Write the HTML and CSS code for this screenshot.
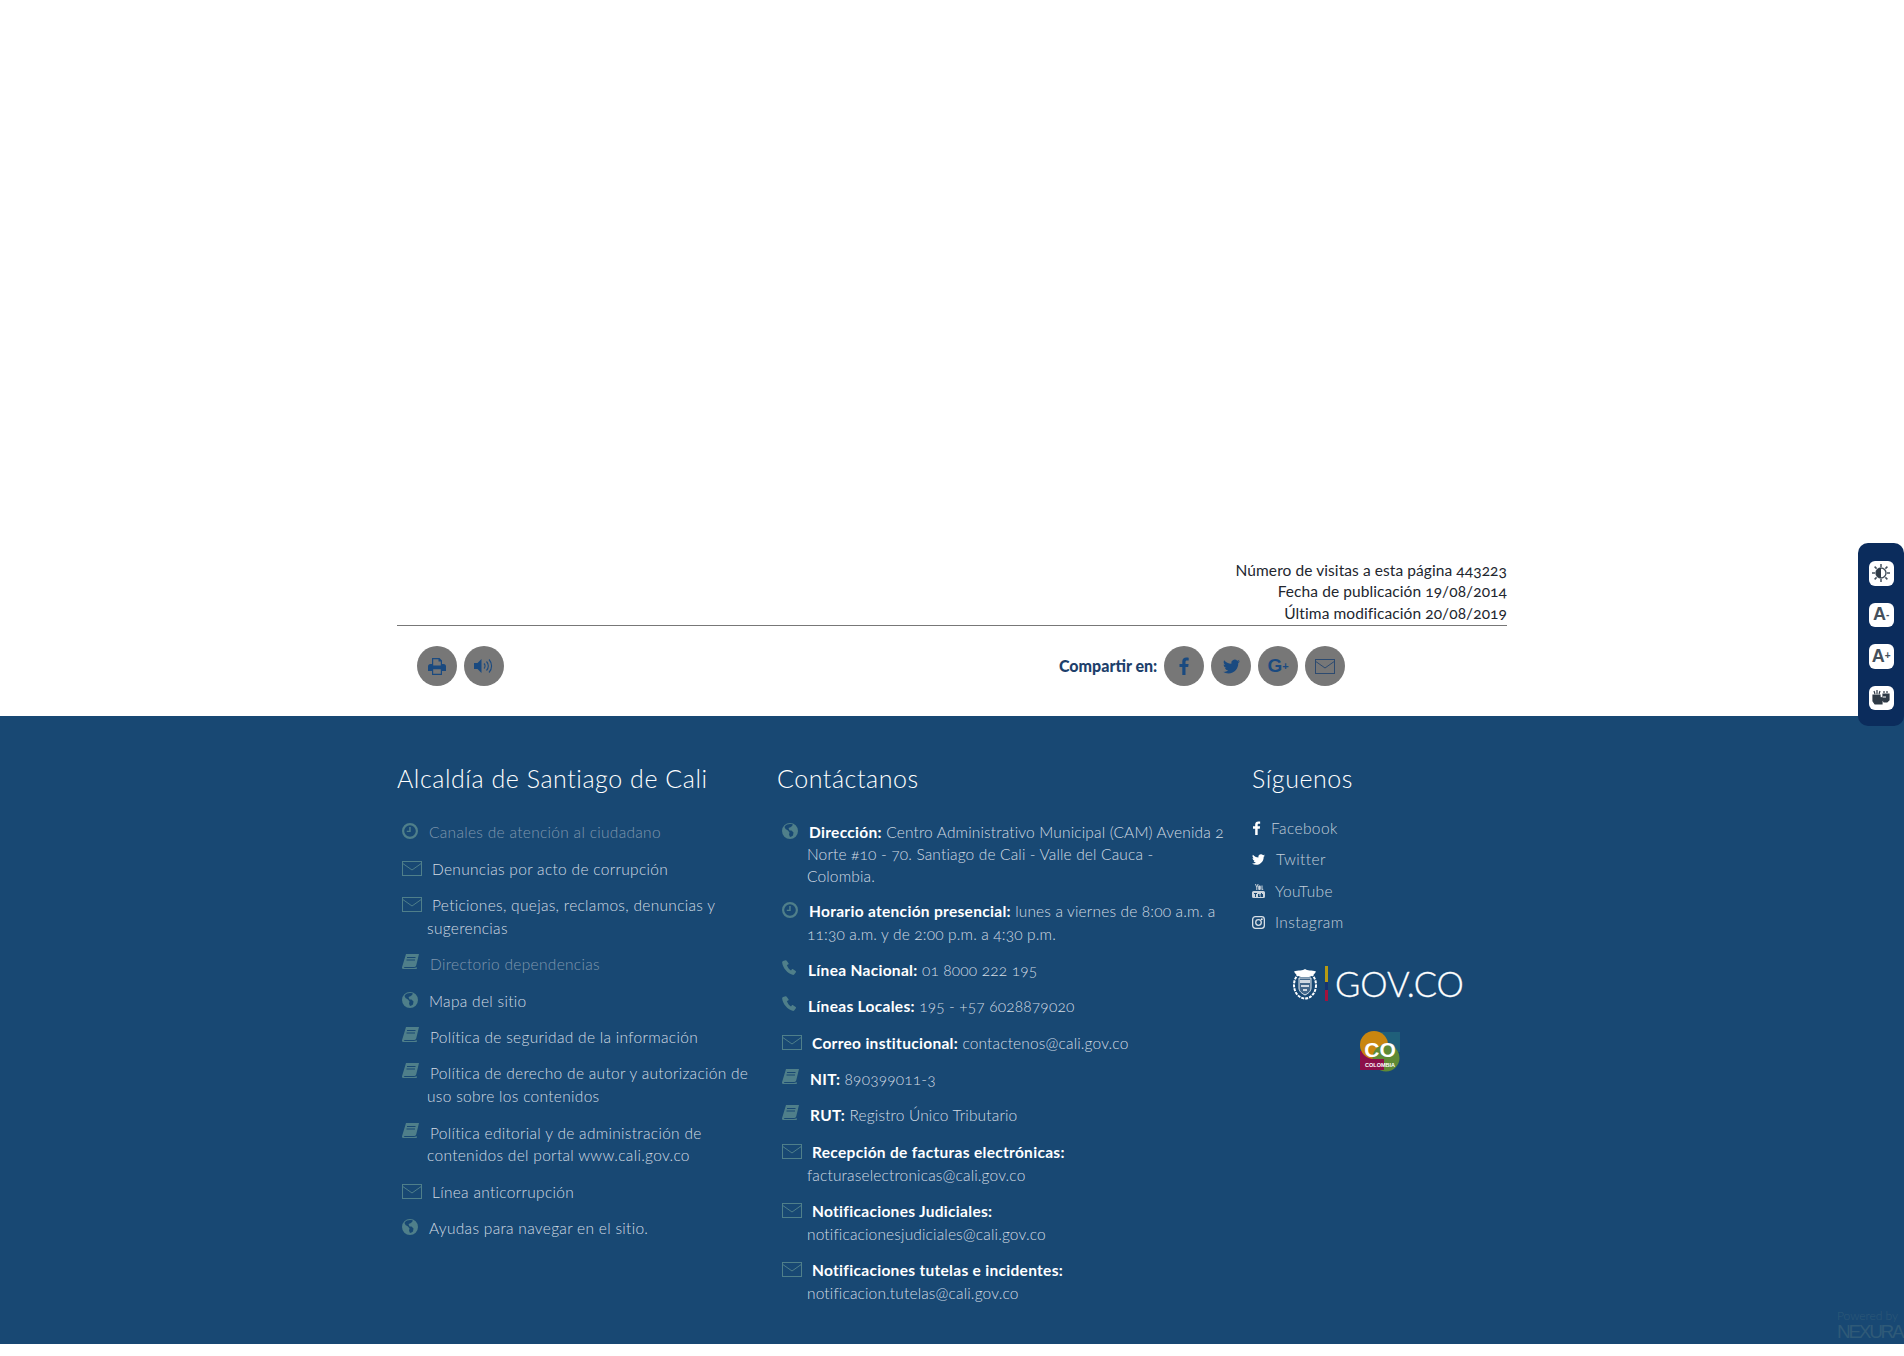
FILE: index.html
```html
<!DOCTYPE html>
<html lang="es">
<head>
    <meta charset="UTF-8">
    <title>Alcaldía de Santiago de Cali</title>
    <link rel="stylesheet" href="styles.css">
</head>
<body>
    <!-- Iconos reutilizables -->
    <svg class="sprites" aria-hidden="true">
        <symbol id="i-clock" viewBox="0 0 16 16"><path fill-rule="evenodd" d="M8 0a8 8 0 1 1 0 16A8 8 0 0 1 8 0zm0 2.2a5.8 5.8 0 1 0 0 11.6A5.8 5.8 0 0 0 8 2.200zM7.200 4h1.500v5H4.800V7.700h2.400z"/></symbol>
        <symbol id="i-mail" viewBox="0 0 20 15"><rect x=".5" y=".5" width="19" height="14" fill="none" stroke="currentColor"/><path d="M.8 2.500 10 9l9.200-6.500" fill="none" stroke="currentColor"/></symbol>
        <symbol id="i-book" viewBox="0 0 17 15"><path d="M4 0h13l-2.800 11.500a2 2 0 0 1-1.800 1.500H3a1.300 1.300 0 0 0-1.200 1H12l3-.8-.3 1.800H1.500A1.500 1.500 0 0 1 0 13.200zM5 3v1h8.500V3zM4.500 5.500v1H13v-1z" fill-rule="evenodd"/></symbol>
        <symbol id="i-globe" viewBox="0 0 16 16"><path fill-rule="evenodd" d="M8 0a8 8 0 1 1 0 16A8 8 0 0 1 8 0zM5 1.500c-1 .5-2 1.500-2.500 2.500l1 2 2.500 1.500 1.500 2-.5 2 1 2.500c1-.2 2-.7 3-1.500l.5-3-2-2H7.500L6.500 5 9 4l2-2.200C10 1 8.500 1 8 1z"/></symbol>
        <symbol id="i-phone" viewBox="0 0 16 16"><path d="M3.800.2 1.200 1C.5 1.300 0 2 .2 3c.7 5.500 5.500 11.200 11 12.800.8.200 1.600 0 2-.6l1.600-2.200c.3-.5.200-1-.2-1.300l-2.800-1.900c-.4-.3-.9-.2-1.200.1l-1 1.200C7.700 10 5.800 7.600 5.200 5.300l1.400-.6c.4-.2.600-.7.500-1.100L5 .7C4.800.3 4.300 0 3.800.2z"/></symbol>
        <symbol id="i-fb" viewBox="0 0 10 18"><path d="M6.500 18V10h2.700l.4-3.100H6.500V5c0-.9.300-1.500 1.500-1.500h1.700V.7C9.400.600 8.400.500 7.300.500 4.900.500 3.300 2 3.300 4.600v2.300H.5V10h2.800v8z"/></symbol>
        <symbol id="i-tw" viewBox="0 0 24 24"><path d="M23.953 4.570a10 10 0 0 1-2.825.775 4.958 4.958 0 0 0 2.163-2.723c-.951.555-2.005.959-3.127 1.184a4.920 4.920 0 0 0-8.384 4.482C7.690 8.095 4.067 6.130 1.640 3.162a4.822 4.822 0 0 0-.666 2.475c0 1.710.870 3.213 2.188 4.096a4.904 4.904 0 0 1-2.228-.616v.060a4.923 4.923 0 0 0 3.946 4.827 4.996 4.996 0 0 1-2.212.085 4.936 4.936 0 0 0 4.604 3.417 9.867 9.867 0 0 1-6.102 2.105c-.390 0-.779-.023-1.170-.067a13.995 13.995 0 0 0 7.557 2.209c9.053 0 13.998-7.496 13.998-13.985 0-.210 0-.420-.015-.630A9.935 9.935 0 0 0 24 4.590z"/></symbol>
        <symbol id="i-yt" viewBox="0 0 13 14"><path d="M3 0h1l.8 2.500L5.600 0h1L5.300 3.500V6h-1V3.500zM7.500 1.500c.9 0 1.300.5 1.300 1.300v2c0 .8-.4 1.300-1.300 1.300S6.200 5.600 6.200 4.800v-2c0-.8.4-1.300 1.300-1.300zM9.500 1.600h1v3.500c.3-.3.500-.3.700-.3v1.200h-.7v-.5c-.5.600-1 .6-1 0z"/><path fill-rule="evenodd" d="M1.500 7h10A1.500 1.500 0 0 1 13 8.500v4a1.500 1.500 0 0 1-1.500 1.500h-10A1.500 1.500 0 0 1 0 12.500v-4A1.500 1.500 0 0 1 1.500 7zM2 9v1h1v3h1v-3h1V9zm4 1v3h2.500v-3h-1v2H7v-2zm3-1v4h2v-3h-1V9z"/></symbol>
        <symbol id="i-ig" viewBox="0 0 14 14"><rect x=".7" y=".7" width="12.600" height="12.600" rx="3" fill="none" stroke="currentColor" stroke-width="1.400"/><circle cx="7" cy="7" r="3" fill="none" stroke="currentColor" stroke-width="1.400"/><circle cx="10.600" cy="3.400" r=".9"/></symbol>
        <symbol id="i-print" viewBox="0 0 18 17"><path fill-rule="evenodd" d="M4 0h7.500L14 2.500V6h1.500A2.500 2.500 0 0 1 18 8.500V13h-4v4H4v-4H0V8.500A2.500 2.500 0 0 1 2.500 6H4zm1.200 1.200V7.500h7.600V3.500h-2.300V1.200zm0 10v4.600h7.600v-4.600z"/></symbol>
        <symbol id="i-sound" viewBox="0 0 20 16"><path d="M7.500 1v14L3.500 11H0V5h3.500z"/><path d="M10 5.500a3.500 3.500 0 0 1 0 5M12.500 3.500a6.500 6.500 0 0 1 0 9M15 1.500a9.500 9.500 0 0 1 0 13" fill="none" stroke="currentColor" stroke-width="1.100"/></symbol>
    </svg>

    <main class="content">
        <div class="visits">
            <p>Número de visitas a esta página 443223</p>
            <p>Fecha de publicación 19/08/2014</p>
            <p>Última modificación 20/08/2019</p>
        </div>
        <div class="tools">
            <div class="tools-left">
                <a class="round-btn"><svg class="ic-print"><use href="#i-print"/></svg></a>
                <a class="round-btn"><svg class="ic-sound"><use href="#i-sound"/></svg></a>
            </div>
            <div class="share">
                <strong class="share-label">Compartir en:</strong>
                <a class="round-btn"><svg class="ic-fb"><use href="#i-fb"/></svg></a>
                <a class="round-btn"><svg class="ic-tw"><use href="#i-tw"/></svg></a>
                <a class="round-btn gplus">G<sup>+</sup></a>
                <a class="round-btn mail-btn"><svg class="ic-mail-big"><use href="#i-mail"/></svg></a>
            </div>
        </div>
    </main>

    <footer class="footer">
        <div class="footer-grid">
            <section>
                <h2>Alcaldía de Santiago de Cali</h2>
                <ul class="links">
                    <li class="dim"><svg class="ic ic-16"><use href="#i-clock"/></svg>Canales de atención al ciudadano</li>
                    <li><svg class="ic ic-mail"><use href="#i-mail"/></svg>Denuncias por acto de corrupción</li>
                    <li><svg class="ic ic-mail"><use href="#i-mail"/></svg>Peticiones, quejas, reclamos, denuncias y<br>sugerencias</li>
                    <li class="dim"><svg class="ic ic-book"><use href="#i-book"/></svg>Directorio dependencias</li>
                    <li><svg class="ic ic-16"><use href="#i-globe"/></svg>Mapa del sitio</li>
                    <li><svg class="ic ic-book"><use href="#i-book"/></svg>Política de seguridad de la información</li>
                    <li><svg class="ic ic-book"><use href="#i-book"/></svg>Política de derecho de autor y autorización de<br>uso sobre los contenidos</li>
                    <li><svg class="ic ic-book"><use href="#i-book"/></svg>Política editorial y de administración de<br>contenidos del portal www.cali.gov.co</li>
                    <li><svg class="ic ic-mail"><use href="#i-mail"/></svg>Línea anticorrupción</li>
                    <li><svg class="ic ic-16"><use href="#i-globe"/></svg>Ayudas para navegar en el sitio.</li>
                </ul>
            </section>
            <section>
                <h2>Contáctanos</h2>
                <ul class="links links-contact">
                    <li class="address"><svg class="ic ic-16"><use href="#i-globe"/></svg><b>Dirección:</b> Centro Administrativo Municipal (CAM) Avenida 2<br>Norte #10 - 70. Santiago de Cali - Valle del Cauca -<br>Colombia.</li>
                    <li><svg class="ic ic-16"><use href="#i-clock"/></svg><b>Horario atención presencial:</b> lunes a viernes de 8:00 a.m. a<br>11:30 a.m. y de 2:00 p.m. a 4:30 p.m.</li>
                    <li><svg class="ic ic-phone"><use href="#i-phone"/></svg><b>Línea Nacional:</b> 01 8000 222 195</li>
                    <li><svg class="ic ic-phone"><use href="#i-phone"/></svg><b>Líneas Locales:</b> 195 - +57 6028879020</li>
                    <li><svg class="ic ic-mail"><use href="#i-mail"/></svg><b>Correo institucional:</b> contactenos@cali.gov.co</li>
                    <li><svg class="ic ic-book"><use href="#i-book"/></svg><b>NIT:</b> 890399011-3</li>
                    <li><svg class="ic ic-book"><use href="#i-book"/></svg><b>RUT:</b> Registro Único Tributario</li>
                    <li><svg class="ic ic-mail"><use href="#i-mail"/></svg><b>Recepción de facturas electrónicas:</b><br>facturaselectronicas@cali.gov.co</li>
                    <li><svg class="ic ic-mail"><use href="#i-mail"/></svg><b>Notificaciones Judiciales:</b><br>notificacionesjudiciales@cali.gov.co</li>
                    <li><svg class="ic ic-mail"><use href="#i-mail"/></svg><b>Notificaciones tutelas e incidentes:</b><br>notificacion.tutelas@cali.gov.co</li>
                </ul>
            </section>
            <section>
                <h2>Síguenos</h2>
                <ul class="social">
                    <li><svg class="s-fb"><use href="#i-fb"/></svg>Facebook</li>
                    <li><svg class="s-tw"><use href="#i-tw"/></svg>Twitter</li>
                    <li><svg class="s-yt"><use href="#i-yt"/></svg>YouTube</li>
                    <li><svg class="s-ig"><use href="#i-ig"/></svg>Instagram</li>
                </ul>
                <div class="gov">
                    <svg class="gov-shield" viewBox="0 0 26 32">
                        <ellipse cx="13" cy="17" rx="11" ry="13.500" fill="none" stroke="#fff" stroke-width="2" stroke-dasharray="3 1"/>
                        <path d="M7 10h12v10c0 3.500-3 5.500-6 7-3-1.500-6-3.500-6-7z" fill="#42678a" stroke="#e3e9ee"/>
                        <path d="M8 12h10v3H8zM9 17h8v2H9zM11 21h4v2h-4z" fill="#cfd9e2"/>
                        <path d="M13 1c2 2 7 1 11 2.500C23 6 20 8.500 17 9H9C6 8.500 3 6 2 3.500 6 2 11 3 13 1z" fill="#fff"/>
                    </svg>
                    <span class="gov-bar"></span>
                    <span class="gov-text">GOV.CO</span>
                </div>
                <svg class="co-logo" viewBox="0 0 40 41">
                    <rect x="18" y="1" width="22" height="20" fill="#1f5f7a"/>
                    <rect x="0" y="20" width="22" height="19" fill="#8c0f4a"/>
                    <circle cx="14" cy="14" r="14" fill="#c9860f"/>
                    <circle cx="26" cy="27" r="13.500" fill="#5f8a35"/>
                    <path d="M0 28h24v11H0z" fill="#8c0f4a"/>
                    <text x="20" y="26" class="co-big">CO</text>
                    <text x="20" y="35.500" class="co-small">COLOMBIA</text>
                </svg>
            </section>
        </div>
    </footer>
    <div class="bottom-strip"></div>

    <!-- Barra de accesibilidad -->
    <aside class="a11y">
        <a class="a11y-btn"><svg viewBox="0 0 20 20" class="a11y-ic"><path d="M10 1v3M10 16v3M1 10h3M16 10h3M3.600 3.600l2 2M14.400 14.400l2 2M3.600 16.400l2-2M14.400 5.600l2-2" stroke="#44505c" stroke-width="1.500" fill="none"/><circle cx="10" cy="10" r="5" fill="#fff" stroke="#44505c" stroke-width="1.400"/><path d="M10 5a5 5 0 0 0 0 10z" fill="#2f3a46"/></svg></a>
        <a class="a11y-btn">A<sup>-</sup></a>
        <a class="a11y-btn">A<sup>+</sup></a>
        <a class="a11y-btn"><svg viewBox="0 0 20 20" class="a11y-ic"><path d="M2 7h7v2l2 1v6H4l-2-3zM12 6h6v6l-2 2h-3l-1-2zM3 3l1 3M6 2v4M9 3 8 6M13 3v2M16 3v2" fill="#2f3a46" stroke="#2f3a46" stroke-width="1.200"/><path d="M12 9h3" stroke="#fff"/></svg></a>
    </aside>

    <div class="nexura">
        <span class="nexura-top">Powered by</span>
        <span class="nexura-name">NEXURA</span>
    </div>
</body>
</html>
```

FILE: styles.css
```css
/* Base */
* {
    box-sizing: border-box;
}

body {
    margin: 0;
    background: #fff;
    font-family: "Lato", "Open Sans", sans-serif;
    font-variant-numeric: oldstyle-nums;
    position: relative;
    height: 1356px;
    overflow: hidden;
}

.sprites {
    display: none;
}

p {
    margin: 0;
}

/* Contenido superior */
.content {
    width: 1110px;
    margin: 0 auto;
    padding-top: 560px;
}

.visits {
    text-align: right;
    font-size: 15.500px;
    line-height: 21.400px;
    color: #22262e;
    letter-spacing: .08px;
    border-bottom: 1px solid #777;
    padding-bottom: 1px;
}

.tools {
    display: flex;
    height: 90px;
    padding: 20px 0 0 20px;
}

.tools-left {
    display: flex;
    gap: 7px;
    width: 642px;
}

.share {
    display: flex;
    align-items: flex-start;
    gap: 7px;
}

.share-label {
    line-height: 40px;
    font-size: 16px;
    font-weight: 900;
    color: #1d3f6b;
    width: 98px;
    white-space: nowrap;
}

.round-btn {
    width: 40px;
    height: 40px;
    border-radius: 50%;
    background: #777;
    color: #1a4a80;
    fill: #1a4a80;
    display: flex;
    align-items: center;
    justify-content: center;
}

.ic-print { width: 18px; height: 17px; }
.ic-sound { width: 20px; height: 16px; }
.ic-fb { width: 10px; height: 18px; }
.ic-tw { width: 17px; height: 17px; }

.ic-mail-big {
    width: 20px;
    height: 15px;
    fill: none;
    color: #2c4a70;
}

.gplus {
    font-family: "Liberation Sans", sans-serif;
    font-size: 19px;
    font-weight: 700;
}

.gplus sup {
    font-size: 11px;
    line-height: 0;
    vertical-align: 1px;
}

/* Pie de pagina */
.footer {
    background: #184873;
    height: 628px;
    color: #c3cfda;
}

.footer-grid {
    width: 1110px;
    margin: 0 auto;
    display: grid;
    grid-template-columns: 380px 475px 1fr;
}

.footer h2 {
    margin: 0;
    padding-top: 46px;
    font-size: 25px;
    line-height: 32px;
    font-weight: 300;
    color: #fff;
    letter-spacing: .55px;
}

.links {
    list-style: none;
    margin: 27px 0 0;
    padding: 0;
    font-size: 15.500px;
    font-weight: 300;
    line-height: 22.800px;
    letter-spacing: .3px;
}

.links-contact {
    letter-spacing: .15px;
}

.links li {
    padding-left: 30px;
    text-indent: -25px;
    margin-bottom: 13.600px;
    color: #d2dbe3;
    white-space: nowrap;
}

.links li.dim {
    color: #7f97ae;
}

.links li.address {
    line-height: 22px;
    margin-bottom: 12.500px;
}

.links b {
    font-weight: 700;
    color: #fff;
    letter-spacing: .3px;
}

.ic {
    display: inline-block;
    vertical-align: -1px;
    color: #4f7f8a;
    fill: #4f7f8a;
    margin-right: 11px;
}

.ic-16 { width: 16px; height: 16px; }
.ic-mail { width: 20px; height: 15px; fill: none; margin-right: 10px; }
.ic-book { width: 17px; height: 15px; margin-right: 11px; vertical-align: 1px; }
.ic-phone { width: 15px; height: 15px; vertical-align: 1px; }

/* Redes */
.social {
    list-style: none;
    margin: 18px 0 0;
    padding: 0;
    font-size: 15.500px;
    font-weight: 300;
    letter-spacing: .4px;
    color: #c3cfda;
}

.social li {
    display: flex;
    align-items: center;
    height: 31.400px;
}

.social svg {
    fill: #fff;
    color: #d8dfe6;
    margin-right: 10px;
}

.s-fb { width: 9px; height: 14px; }
.s-tw { width: 13px; height: 13px; margin-right: 11px !important; }
.s-yt { width: 13px; height: 14px; fill: #ccd5dd !important; }
.s-ig { width: 13px; height: 13px; }

.gov {
    display: flex;
    align-items: center;
    margin: 28px 0 0 40px;
}

.gov-shield {
    width: 26px;
    height: 32px;
}

.gov-bar {
    width: 3px;
    height: 35px;
    margin: 0 7px;
    background: linear-gradient(#b79a12 0 45%, #17336f 45% 70%, #a3123c 70%);
}

.gov-text {
    font-size: 34.500px;
    line-height: 36px;
    font-weight: 300;
    color: #fff;
    letter-spacing: -.1px;
    -webkit-text-stroke: .3px #fff;
}

.co-logo {
    display: block;
    width: 40px;
    height: 41px;
    margin: 29px 0 0 108px;
}

.co-big {
    font-family: "Liberation Sans", sans-serif;
    font-size: 21px;
    font-weight: 700;
    fill: #fff;
    text-anchor: middle;
}

.co-small {
    font-family: "Liberation Sans", sans-serif;
    font-size: 5.500px;
    font-weight: 700;
    fill: #fff;
    text-anchor: middle;
}

.bottom-strip {
    height: 12px;
    background: #fff;
}

/* Barra lateral de accesibilidad */
.a11y {
    position: absolute;
    top: 543px;
    right: 0;
    width: 46px;
    height: 183px;
    padding: 18px 0 0 11px;
    background: #0b2c5c;
    border-radius: 10px;
    display: flex;
    flex-direction: column;
    gap: 17px;
}

.a11y-btn {
    width: 24.500px;
    height: 24.500px;
    background: #fff;
    border-radius: 6px;
    display: flex;
    align-items: center;
    justify-content: center;
    color: #44505c;
    font-family: "Liberation Sans", sans-serif;
    font-size: 18px;
    font-weight: 700;
}

.a11y-btn sup {
    font-size: 10px;
    font-weight: 700;
    line-height: 0;
    vertical-align: 6px;
}

.a11y-ic {
    width: 20px;
    height: 20px;
}

/* Marca del proveedor */
.nexura {
    position: absolute;
    left: 1837px;
    top: 1309px;
    display: flex;
    flex-direction: column;
    color: #2f5a78;
    font-weight: 300;
    white-space: nowrap;
}

.nexura-top {
    font-size: 12px;
    line-height: 14px;
}

.nexura-name {
    font-family: "Liberation Sans", sans-serif;
    font-size: 19px;
    line-height: 18px;
    letter-spacing: -2.300px;
}
```
